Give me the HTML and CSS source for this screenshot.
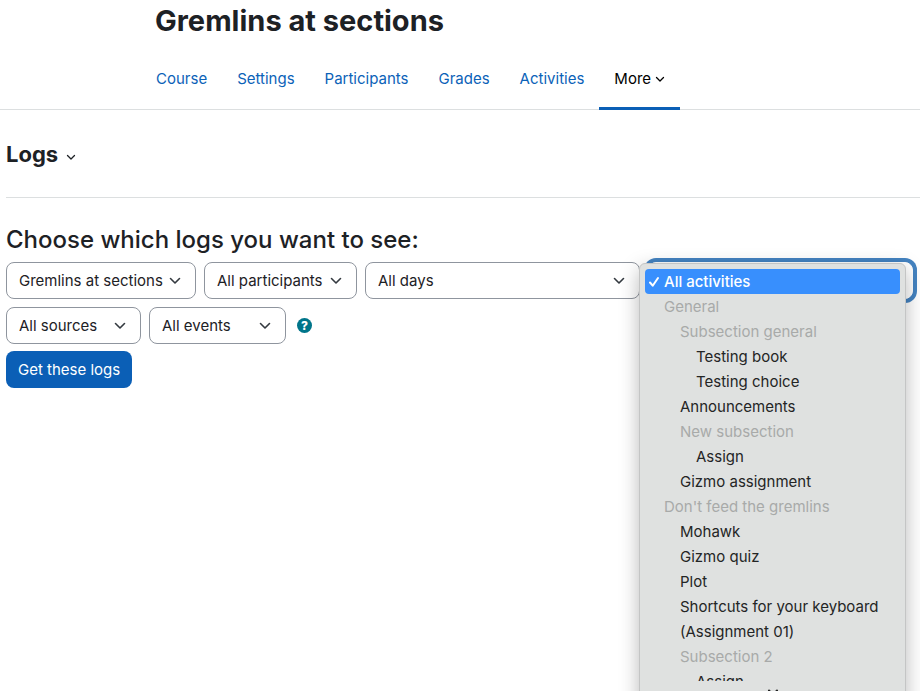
FILE: index.html
```html
<!DOCTYPE html>
<html lang="en">
<head>
<meta charset="utf-8">
<title>Logs</title>
<link rel="stylesheet" href="styles.css">
</head>
<body>
<div class="page">
  <header class="course-header">
    <h1>Gremlins at sections</h1>
    <nav class="tabs" aria-label="Course">
      <a href="#course">Course</a>
      <a href="#settings">Settings</a>
      <a href="#participants">Participants</a>
      <a href="#grades">Grades</a>
      <a href="#activities">Activities</a>
      <a href="#more" class="active">More <svg class="caret" viewBox="0 0 10 10" aria-hidden="true"><path d="M1.5 3.5 5 7l3.500-3.500"/></svg></a>
    </nav>
  </header>
  <main>
    <div class="report-bar">
      <button type="button" class="report-menu">Logs <svg class="caret" viewBox="0 0 10 10" aria-hidden="true"><path d="M1.500 3.500 5 7l3.500-3.500"/></svg></button>
    </div>
    <h2>Choose which logs you want to see:</h2>
    <form class="filters">
      <div class="row">
        <select class="course" aria-label="Course"><option>Gremlins at sections</option></select>
        <select class="people" aria-label="Participants"><option>All participants</option></select>
        <select class="days" aria-label="Days"><option>All days</option></select>
        <div class="picker">
          <select class="activities" aria-label="Activities"><option>All activities</option></select>
          <div class="popup">
            <ul role="listbox" aria-label="Activities">
              <li role="option" aria-selected="true" class="selected"><svg class="check" viewBox="0 0 12 12" aria-hidden="true"><path d="M2 6.500 4.700 9.700 10 2"/></svg>All activities</li>
              <li class="group">General</li>
              <li class="group level-1">Subsection general</li>
              <li role="option" class="level-2">Testing book</li>
              <li role="option" class="level-2">Testing choice</li>
              <li role="option" class="level-1">Announcements</li>
              <li class="group level-1">New subsection</li>
              <li role="option" class="level-2">Assign</li>
              <li role="option" class="level-1">Gizmo assignment</li>
              <li class="group">Don't feed the gremlins</li>
              <li role="option" class="level-1">Mohawk</li>
              <li role="option" class="level-1">Gizmo quiz</li>
              <li role="option" class="level-1">Plot</li>
              <li role="option" class="level-1">Shortcuts for your keyboard</li>
              <li role="option" class="level-1">(Assignment 01)</li>
              <li class="group level-1">Subsection 2</li>
              <li role="option" class="level-2">Assign</li>
            </ul>
            <svg class="scroll-arrow" viewBox="0 0 12 8" aria-hidden="true"><path d="M2 1.500 6 6l4-4.500"/></svg>
          </div>
        </div>
        <select class="sources" aria-label="Sources"><option>All sources</option></select>
        <select class="events" aria-label="Events"><option>All events</option></select>
        <button type="button" class="help" aria-label="Help">?</button>
      </div>
      <button type="submit" class="submit">Get these logs</button>
    </form>
  </main>
</div>
</body>
</html>
```
FILE: styles.css
```css
* { box-sizing: border-box; }

body {
  margin: 0;
  background: #fff;
  color: #1d2125;
  font: 15px/24px Inter, "Liberation Sans", sans-serif;
}

button, select { font: inherit; }

.page {
  height: 100vh;
  overflow: hidden;
}

.course-header {
  padding-left: 155px;
  border-bottom: 1px solid #dcdfe0;
}

h1 {
  margin: 0;
  padding: 2px 0 10px;
  font-size: 29px;
  line-height: 38px;
  font-weight: 700;
}

.tabs {
  display: flex;
  margin: 0 0 -1px -14px;
}

.tabs a {
  display: flex;
  align-items: center;
  gap: 4px;
  height: 60px;
  padding: 0 15px;
  border-bottom: 3px solid transparent;
  color: #0b62b8;
  text-decoration: none;
}

.tabs .active {
  border-color: #0b5fb6;
  color: #000;
}

.caret {
  width: 10px;
  height: 10px;
}

.caret path, .check path, .scroll-arrow path {
  fill: none;
  stroke: currentColor;
  stroke-width: 1.3;
  stroke-linecap: round;
  stroke-linejoin: round;
}

main { padding-left: 6px; }

.report-bar {
  padding: 28px 0 26px;
  border-bottom: 1px solid #dcdfe0;
}

.report-menu {
  display: flex;
  align-items: center;
  gap: 8px;
  padding: 0;
  border: 0;
  background: none;
  color: inherit;
  font-size: 22px;
  line-height: 33px;
  font-weight: 700;
}

.report-menu .caret { margin-top: 4px; }

h2 {
  margin: 0;
  padding: 25px 0 5px;
  font-size: 24px;
  line-height: 34px;
  font-weight: 500;
}

.row {
  display: flex;
  flex-wrap: wrap;
  gap: 8px;
  margin-bottom: 7px;
}

select {
  appearance: none;
  height: 37px;
  padding: 0 28px 0 12px;
  border: 1px solid #8f959e;
  border-radius: 8px;
  background: #fff url("data:image/svg+xml,%3Csvg xmlns='http://www.w3.org/2000/svg' viewBox='0 0 12 12'%3E%3Cpath d='M1.500 3.500 6 8l4.500-4.500' fill='none' stroke='%23343a40' stroke-width='1.600' stroke-linecap='round' stroke-linejoin='round'/%3E%3C/svg%3E") no-repeat right 14px center / 12px 12px;
  color: inherit;
}

.course { width: 190px; }
.people { width: 153px; }
.days { width: 275px; }
.activities { width: 265px; }
.sources { width: 135px; }
.events { width: 137px; }

.picker { position: relative; }

.activities {
  display: block;
  box-shadow: 0 0 0 4px #4483c1;
  border-color: #fff;
}

.popup {
  position: absolute;
  z-index: 2;
  top: 1px;
  left: -9px;
  width: 267px;
  padding: 5px;
  border: 1px solid #c4c5c5;
  border-radius: 6px;
  background: #dfe1e0;
  box-shadow: 0 6px 20px rgba(0, 0, 0, 0.28);
  color: #242525;
}

.popup ul {
  height: calc(100vh - 279px);
  margin: 0;
  padding: 0;
  overflow: hidden;
  list-style: none;
}

.popup li {
  display: flex;
  align-items: center;
  height: 25px;
  padding-left: 19px;
  white-space: nowrap;
}

.popup .level-1 { padding-left: 35px; }
.popup .level-2 { padding-left: 51px; }
.popup .group { color: #a8aaa9; }

.popup .selected {
  gap: 4px;
  padding-left: 3px;
  border-radius: 4px;
  background: #388ffd;
  color: #fff;
  font-weight: 500;
}

.check {
  width: 12px;
  height: 12px;
}

.check path { stroke-width: 2; }

.scroll-arrow {
  display: block;
  width: 12px;
  height: 8px;
  margin: 8px auto;
}

.scroll-arrow path { stroke-width: 2; }

.help {
  align-self: center;
  width: 15px;
  height: 15px;
  margin-left: 3px;
  padding: 0;
  border: 0;
  border-radius: 50%;
  background: #00758a;
  color: #fff;
  font-size: 12px;
  line-height: 15px;
  font-weight: 800;
}

.submit {
  height: 37px;
  padding: 0 12px;
  border: 0;
  border-radius: 8px;
  background: #0b5fb6;
  color: #fff;
}
```
